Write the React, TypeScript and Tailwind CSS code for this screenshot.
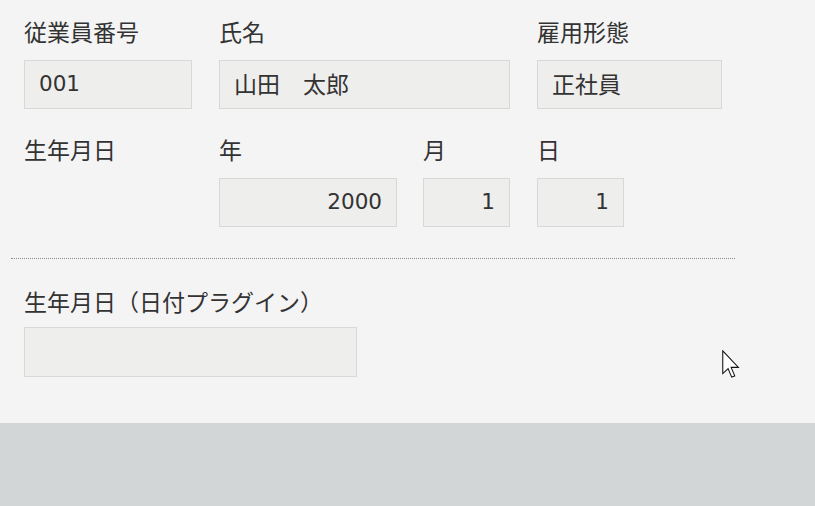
import React from "react";

const font = {
  fontFamily: '"Noto Sans CJK JP", "Noto Sans", sans-serif',
};

function Box({
  w,
  text,
  right,
  num,
}: {
  w: string;
  text?: string;
  right?: boolean;
  num?: boolean;
}) {
  return (
    <div
      className={`${w} h-[49px] mt-[11px] bg-[#eeeeec] border border-[#d8d8d8] px-[14px] flex items-center text-[#333333] ${
        right ? "justify-end" : "justify-start"
      }`}
    >
      {num ? (
        <span className="text-[21.5px] font-['DejaVu_Sans','Noto_Sans_CJK_JP',sans-serif] leading-none pb-[1px]">
          {text}
        </span>
      ) : (
        <span className="text-[23px] leading-none pb-[2px]">{text}</span>
      )}
    </div>
  );
}

function Label({ children }: { children: React.ReactNode }) {
  return (
    <div className="h-[30px] leading-[24px] text-[23px] text-[#333333] whitespace-nowrap">
      {children}
    </div>
  );
}

export default function App() {
  return (
    <div className="w-[815px] h-[506px] bg-[#d3d6d7] overflow-hidden" style={font}>
      <div className="relative h-[423px] bg-[#f4f4f4] pt-[19px]">
        {/* Row 1 */}
        <div className="flex pl-[24px] gap-[27px]">
          <div className="flex flex-col">
            <Label>従業員番号</Label>
            <Box w="w-[168px]" text="001" num />
          </div>
          <div className="flex flex-col">
            <Label>氏名</Label>
            <Box w="w-[291px]" text="山田　太郎" />
          </div>
          <div className="flex flex-col">
            <Label>雇用形態</Label>
            <Box w="w-[185px]" text="正社員" />
          </div>
        </div>

        {/* Row 2 */}
        <div className="flex pl-[24px] mt-[28px]">
          <div className="flex flex-col w-[195px]">
            <Label>生年月日</Label>
          </div>
          <div className="flex flex-col mr-[26px]">
            <Label>年</Label>
            <Box w="w-[178px]" text="2000" right num />
          </div>
          <div className="flex flex-col mr-[27px]">
            <Label>月</Label>
            <Box w="w-[87px]" text="1" right num />
          </div>
          <div className="flex flex-col">
            <Label>日</Label>
            <Box w="w-[87px]" text="1" right num />
          </div>
        </div>

        {/* Divider */}
        <div className="ml-[11px] w-[724px] mt-[31px] border-t border-dotted border-[#8c8c8c]" />

        {/* Row 3 */}
        <div className="flex pl-[24px] mt-[30px]">
          <div className="flex flex-col">
            <Label>生年月日（日付プラグイン）</Label>
            <div className="w-[333px] h-[50px] mt-[8px] bg-[#eeeeec] border border-[#d8d8d8]" />
          </div>
        </div>

        {/* Mouse cursor overlay */}
        <svg
          className="absolute left-[722px] top-[350px]"
          width="19"
          height="29"
          viewBox="0 0 12.5 19"
        >
          <path
            d="M0.5 0.5 L0.5 15.5 L4 12.2 L6.4 17.8 L8.4 17 L6 11.4 L10.8 11.4 Z"
            fill="#ffffff"
            stroke="#111111"
            strokeWidth="0.7"
            strokeLinejoin="miter"
          />
        </svg>
      </div>
    </div>
  );
}
